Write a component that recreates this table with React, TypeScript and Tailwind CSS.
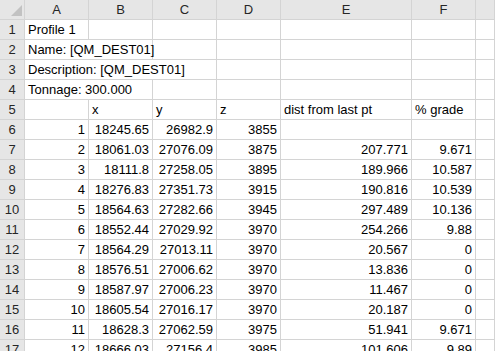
const cols = ["A", "B", "C", "D", "E", "F", ""];

const data: string[][] = [
  ["1", "18245.65", "26982.9", "3855", "", ""],
  ["2", "18061.03", "27076.09", "3875", "207.771", "9.671"],
  ["3", "18111.8", "27258.05", "3895", "189.966", "10.587"],
  ["4", "18276.83", "27351.73", "3915", "190.816", "10.539"],
  ["5", "18564.63", "27282.66", "3945", "297.489", "10.136"],
  ["6", "18552.44", "27029.92", "3970", "254.266", "9.88"],
  ["7", "18564.29", "27013.11", "3970", "20.567", "0"],
  ["8", "18576.51", "27006.62", "3970", "13.836", "0"],
  ["9", "18587.97", "27006.23", "3970", "11.467", "0"],
  ["10", "18605.54", "27016.17", "3970", "20.187", "0"],
  ["11", "18628.3", "27062.59", "3975", "51.941", "9.671"],
  ["12", "18666.03", "27156.4", "3985", "101.606", "9.89"],
];

const cell = "h-5 border-r border-b border-[#d4d4d4] leading-[19px] whitespace-nowrap";
const head = "h-5 border-r border-b border-[#d4d4d4] bg-[#e6e6e6] leading-[19px] text-center text-[#262626]";

function RowHead({ n }: { n: number }) {
  return <div className={head}>{n}</div>;
}

function Empty({ span = 1 }: { span?: number }) {
  const spans: Record<number, string> = { 1: "", 2: "col-span-2", 3: "col-span-3" };
  return <div className={`${cell} ${spans[span]}`} />;
}

export default function App() {
  return (
    <div className="w-[495px] h-[351px] overflow-hidden bg-white text-black font-['Liberation_Sans',sans-serif] text-[13px]">
      <div className="grid grid-cols-[25px_64px_64px_64px_64px_131px_64px_1fr]">
        {/* corner */}
        <div className={`${head} relative`}>
          <svg className="absolute left-0 top-0" width="24" height="19" viewBox="0 0 24 19">
            <polygon points="22,5 22,16 11,16" fill="#c2c2c2" />
          </svg>
        </div>
        {cols.map((c, i) => (
          <div key={i} className={head}>
            {c}
          </div>
        ))}

        {/* row 1 */}
        <RowHead n={1} />
        <div className={`${cell} pl-[3px]`}>Profile 1</div>
        <Empty /><Empty /><Empty /><Empty /><Empty /><Empty />

        {/* row 2 */}
        <RowHead n={2} />
        <div className={`${cell} col-span-2 pl-[3px]`}>Name: [QM_DEST01]</div>
        <Empty /><Empty /><Empty /><Empty /><Empty />

        {/* row 3 */}
        <RowHead n={3} />
        <div className={`${cell} col-span-3 pl-[3px]`}>Description: [QM_DEST01]</div>
        <Empty /><Empty /><Empty /><Empty />

        {/* row 4 */}
        <RowHead n={4} />
        <div className={`${cell} col-span-2 pl-[3px]`}>Tonnage: 300.000</div>
        <Empty /><Empty /><Empty /><Empty /><Empty />

        {/* row 5 */}
        <RowHead n={5} />
        <Empty />
        <div className={`${cell} pl-[3px]`}>x</div>
        <div className={`${cell} pl-[3px]`}>y</div>
        <div className={`${cell} pl-[3px]`}>z</div>
        <div className={`${cell} pl-[3px]`}>dist from last pt</div>
        <div className={`${cell} pl-[3px]`}>% grade</div>
        <Empty />

        {data.map((row, r) => (
          <div key={r} className="contents">
            <RowHead n={r + 6} />
            {row.map((v, i) => (
              <div key={i} className={`${cell} text-right pr-[3px] overflow-hidden`}>
                {v}
              </div>
            ))}
            <Empty />
          </div>
        ))}
      </div>
    </div>
  );
}
